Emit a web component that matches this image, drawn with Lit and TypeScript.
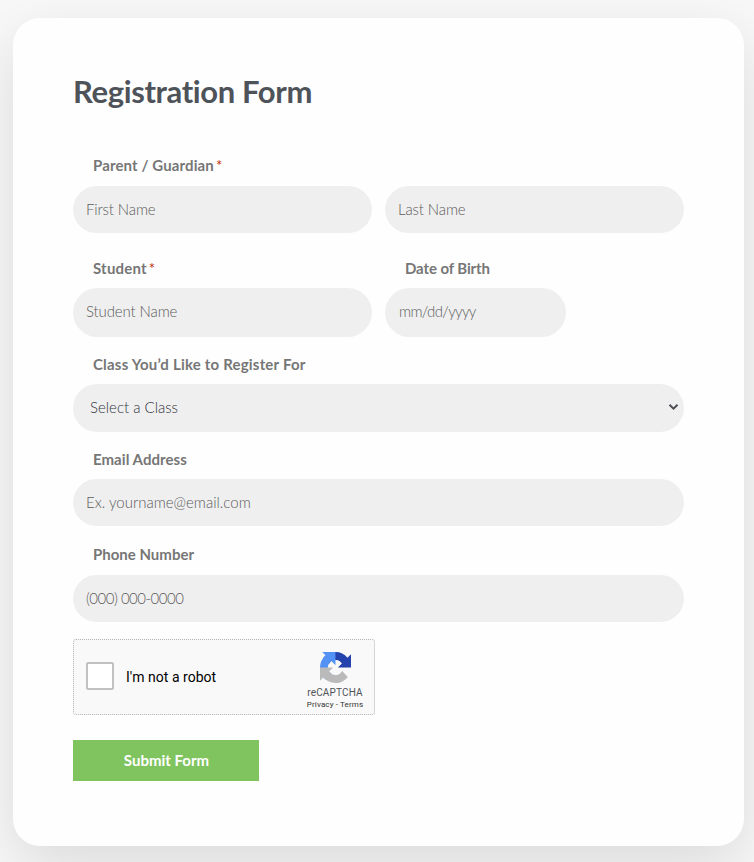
import { LitElement, html, css, nothing } from "lit";

class FormField extends LitElement {
  static properties = {
    label: { type: String },
    required: { type: Boolean },
  };
  declare label: string;
  declare required: boolean;

  static styles = css`
    :host { display: block; min-width: 0; }
    .label {
      box-sizing: border-box;
      display: flex;
      gap: 2px;
      height: 20px;
      padding-left: 20px;
      font: 700 15px/18px "Lato", sans-serif;
      letter-spacing: var(--track, 0.1px);
      font-variant-ligatures: none;
      color: #767676;
      white-space: nowrap;
    }
    .star { color: #c02b0a; font-size: 15px; font-weight: 400; letter-spacing: 0; }
  `;

  render() {
    return html`
      <div class="label">
        <span>${this.label}</span>
        ${this.required ? html`<span class="star">*</span>` : nothing}
      </div>
      <slot></slot>
    `;
  }
}
customElements.define("form-field", FormField);

class CaptchaBox extends LitElement {
  static styles = css`
    :host {
      box-sizing: border-box;
      display: flex;
      align-items: center;
      width: 302px;
      height: 76px;
      padding: 0 10px 0 12px;
      border: 1px dotted #b4b4b4;
      border-radius: 3px;
      background: #f9f9f9;
      color: #555;
      font-family: "Roboto", sans-serif;
    }
    .box {
      box-sizing: border-box;
      width: 28px;
      height: 28px;
      margin-top: -3px;
      border: 2px solid #c1c1c1;
      border-radius: 2px;
      background: #fff;
    }
    .text { margin-left: 12px; flex: 1; font-size: 14px; line-height: 20px; color: #000; letter-spacing: 0.03px; }
    .brand { display: flex; flex-direction: column; align-items: center; width: 58px; white-space: nowrap; margin-top: 8px; }
    .logo { display: block; width: 31px; height: 31px; }
    .name { margin-top: 4px; font-size: 10px; line-height: 12px; color: #4f5358; letter-spacing: 0.15px; }
    .links { font-size: 8px; line-height: 12px; color: #333; letter-spacing: 0.13px; }
  `;

  render() {
    return html`
      <div class="box"></div>
      <div class="text">I'm not a robot</div>
      <div class="brand">
        <svg class="logo" viewBox="0 0 64 64">
          <path fill="#2443ac" d="M64 31.96a31 31 0 0 0-.03-1.37V4.53l-7.2 7.2A31.94 31.94 0 0 0 32.04 0C21.65 0 12.42 4.96 6.57 12.63l11.8 11.94a15.7 15.7 0 0 1 4.79-5.37c2.07-1.61 5-2.93 9.04-2.93.49 0 .86.06 1.14.16 5.01.4 9.35 3.16 11.91 7.17l-8.36 8.36L64 31.87" />
          <path fill="#5392f5" d="M31.86 0a31 31 0 0 0-1.37.04H4.53l7.2 7.2A31.94 31.94 0 0 0 0 31.96c0 10.39 4.96 19.62 12.63 25.47l11.94-11.8a15.7 15.7 0 0 1-5.37-4.79c-1.61-2.07-2.93-5-2.93-9.04 0-.49.06-.86.16-1.14.4-5.01 3.16-9.35 7.17-11.91l8.36 8.36L31.87 0" />
          <path fill="#bababa" d="M0 32.04c0 .46.01.92.03 1.37v26.06l7.2-7.2A31.94 31.94 0 0 0 31.96 64c10.39 0 19.62-4.96 25.47-12.63l-11.8-11.94a15.7 15.7 0 0 1-4.79 5.37c-2.07 1.61-5 2.93-9.04 2.93-.49 0-.86-.06-1.14-.16-5.01-.4-9.35-3.16-11.91-7.17l8.36-8.36L0 32.13" />
        </svg>
        <div class="name">reCAPTCHA</div>
        <div class="links">Privacy - Terms</div>
      </div>
    `;
  }
}
customElements.define("captcha-box", CaptchaBox);

class AppRoot extends LitElement {
  static styles = css`
    :host {
      box-sizing: border-box;
      display: block;
      height: 862px;
      padding: 18px 10px 16px 13px;
      overflow: hidden;
      background: #f8f8f8;
      font-family: "Lato", sans-serif;
    }
    .card {
      box-sizing: border-box;
      height: 828px;
      padding: 53px 60px 0;
      border-radius: 27px;
      background: #fefefe;
      box-shadow: 0 20px 60px rgba(0, 0, 0, 0.12);
    }
    .title {
      margin: 0;
      height: 40px;
      font-size: 31px;
      line-height: 40px;
      font-weight: 700;
      letter-spacing: -0.38px;
      font-variant-ligatures: none;
      color: #4e535a;
    }
    .form { display: flex; flex-direction: column; margin-top: 45px; }
    .row { display: grid; grid-template-columns: 299px 299px; column-gap: 13px; }
    .student { margin-top: 26px; }
    .class { margin-top: 18px; --track: 0.2px; }
    .email { margin-top: 18px; --track: 0.05px; }
    .phone { margin-top: 19px; --track: 0; }
    .parent { --track: 0.12px; }
    .child { --track: 0.2px; }
    .birth { --track: -0.1px; }
    .input {
      box-sizing: border-box;
      display: block;
      width: 100%;
      height: 47px;
      margin: 10px 0 0;
      padding: 0 13px 2px;
      border: 0;
      border-radius: 25px;
      outline: 0;
      background: #efefef;
      color: #4e535a;
      font: 300 15px "Lato", sans-serif;
      letter-spacing: -0.12px;
      font-variant-ligatures: none;
    }
    .input::placeholder { color: #5c5c5c; opacity: 1; }
    .tall { height: 49px; margin-top: 9px; padding-bottom: 3px; }
    .date { width: 181px; padding-left: 14px; letter-spacing: -0.65px; }
    .mail { margin-top: 9px; letter-spacing: 0; }
    .tel { letter-spacing: -0.5px; }
    .split { padding-top: 20px; display: grid; align-content: end; }
    .select {
      display: flex;
      align-items: center;
      justify-content: space-between;
      height: 48px;
      margin-top: 9px;
      padding: 0 5px 2px 17px;
      color: #30353b;
      letter-spacing: 0;
    }
    .chevron { width: 11px; height: 8px; }
    .captcha { margin-top: 17px; }
    .submit {
      width: 186px;
      height: 41px;
      margin-top: 25px;
      padding: 0 0 2px 1px;
      border: 0;
      background: #80c45f;
      color: #fff;
      font: 700 15px "Lato", sans-serif;
    }
  `;

  render() {
    return html`
      <main class="card">
        <h1 class="title">Registration Form</h1>
        <div class="form">
          <div class="row">
            <form-field class="parent" label="Parent / Guardian" required>
              <input class="input" placeholder="First Name" />
            </form-field>
            <div class="split"><input class="input" placeholder="Last Name" /></div>
          </div>
          <div class="row student">
            <form-field class="child" label="Student" required>
              <input class="input tall" placeholder="Student Name" />
            </form-field>
            <form-field class="birth" label="Date of Birth">
              <input class="input tall date" placeholder="mm/dd/yyyy" />
            </form-field>
          </div>
          <form-field class="class" label="Class You’d Like to Register For">
            <div class="input select">
              <span>Select a Class</span>
              <svg class="chevron" viewBox="0 0 11 8"><path d="M1.5 1.7 5.5 5.6 9.5 1.7" fill="none" stroke="#4b4f54" stroke-width="2" /></svg>
            </div>
          </form-field>
          <form-field class="email" label="Email Address">
            <input class="input mail" placeholder="Ex. yourname@email.com" />
          </form-field>
          <form-field class="phone" label="Phone Number">
            <input class="input tel" placeholder="(000) 000-0000" />
          </form-field>
          <captcha-box class="captcha"></captcha-box>
          <button class="submit">Submit Form</button>
        </div>
      </main>
    `;
  }
}
customElements.define("app-root", AppRoot);
